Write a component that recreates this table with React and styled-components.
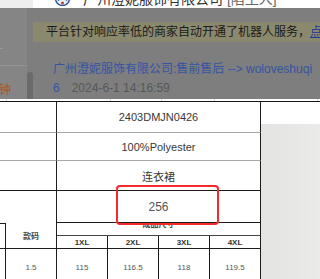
import React from "react";
import styled, { createGlobalStyle } from "styled-components";

const Global = createGlobalStyle`
  html, body { margin: 0; padding: 0; background: #fff; }
  body { font-family: "Liberation Sans", "Noto Sans CJK SC", sans-serif; }
  #root { width: 320px; height: 279px; overflow: hidden; }
`;

const Page = styled.div`
  width: 320px;
  height: 279px;
  overflow: hidden;
  display: flex;
  flex-direction: column;
  background: #fff;
`;

/* ---------- window title strip ---------- */
const TitleStrip = styled.div`
  height: 8px;
  flex: none;
  display: flex;
  overflow: hidden;
  background: #fff;
`;
const TitleSide = styled.div`
  width: 33px;
  flex: none;
  background: #eeeeee;
`;
const Avatar = styled.svg`
  flex: none;
  width: 15px;
  height: 15px;
  margin-left: 22px;
  margin-top: -9px;
`;
const TitleText = styled.span`
  margin-left: 13px;
  margin-top: -11px;
  font-size: 14px;
  line-height: 20px;
  color: #333;
  white-space: nowrap;
`;
const TitleTag = styled.span`
  color: #666;
`;

/* ---------- dimmed chat area ---------- */
const ChatArea = styled.div`
  height: 91px;
  flex: none;
  display: flex;
  background: #7e7e7e;
  overflow: hidden;
`;
const SideColumn = styled.div`
  width: 27px;
  flex: none;
  display: flex;
  flex-direction: column;
  background: #858585;
`;
const SideDash = styled.div`
  width: 3px;
  height: 1px;
  margin-top: 40px;
  background: #9a9a9a;
`;
const SideRule = styled.div`
  height: 1px;
  margin-top: 16px;
  background: #939393;
`;
const SideLabel = styled.div`
  margin-top: 17px;
  margin-left: -1px;
  font-size: 12px;
  line-height: 14px;
  color: #b0541f;
`;
const ScrollTrack = styled.div`
  width: 6px;
  flex: none;
  display: flex;
  flex-direction: column;
  justify-content: flex-end;
`;
const ScrollThumb = styled.div`
  height: 27px;
  background: #6b6b6b;
  border-radius: 3px 3px 0 0;
`;
const ChatMain = styled.div`
  flex: 1;
  min-width: 0;
  display: flex;
  flex-direction: column;
`;
const Banner = styled.div`
  margin-top: 14px;
  height: 20px;
  padding-left: 13px;
  background: #8a896e;
  font-size: 12px;
  line-height: 20px;
  color: #1a1a1a;
  white-space: nowrap;
  overflow: hidden;
`;
const BannerLink = styled.span`
  color: #1d3a9a;
  text-decoration: underline;
`;
const MessageLine = styled.div`
  margin-top: ${(p) => p.$gap}px;
  padding-left: 20px;
  font-size: 12px;
  line-height: 16px;
  color: ${(p) => p.$color};
  white-space: nowrap;
  overflow: hidden;
`;
const Count = styled.span`
  color: #3454a4;
  margin-right: 12px;
`;

/* ---------- faint grid strip above the sheet ---------- */
const GridStrip = styled.div`
  height: 2px;
  flex: none;
  display: flex;
  background: #fff;
`;
const FaintCell = styled.div`
  width: ${(p) => p.$w}px;
  flex: none;
  border-right: 1px solid #d6d6d6;
`;

/* ---------- spreadsheet ---------- */
const Sheet = styled.div`
  flex: 1;
  min-height: 0;
  display: flex;
  border-top: 1px solid #151515;
  overflow: hidden;
`;
const SheetGrid = styled.div`
  position: relative;
  width: 261px;
  flex: none;
  display: grid;
  grid-template-columns: 6px repeat(5, 51px);
  grid-template-rows: 31px 28px 30px 32px 13px 13px 36px;
  font-family: "Liberation Sans", "Noto Sans CJK SC", sans-serif;
`;
const Cell = styled.div`
  box-sizing: border-box;
  grid-column: ${(p) => p.$col};
  grid-row: ${(p) => p.$row};
  display: flex;
  align-items: center;
  justify-content: center;
  overflow: hidden;
  border-right: ${(p) => (p.$noRight ? "none" : "1px solid #1c1c1c")};
  border-bottom: ${(p) => (p.$bottom ? `1px solid ${p.$bottom}` : "none")};
  border-top: ${(p) => (p.$top ? `1px solid ${p.$top}` : "none")};
  font-size: ${(p) => p.$size || 11}px;
  font-weight: ${(p) => (p.$bold ? 700 : 400)};
  color: ${(p) => p.$color || "#383838"};
  white-space: nowrap;
`;
const ClippedHead = styled.div`
  box-sizing: border-box;
  grid-column: 3 / span 4;
  grid-row: 5;
  overflow: hidden;
  text-align: center;
  border-right: 1px solid #1c1c1c;
  border-bottom: 1px solid #444;
`;
const ClippedText = styled.div`
  margin-top: -2px;
  font-size: 8px;
  line-height: 8px;
  font-weight: 700;
  color: #444;
`;
const Highlight = styled.div`
  position: absolute;
  left: 116px;
  top: 83px;
  width: 103px;
  height: 40px;
  box-sizing: border-box;
  border: 2.5px solid #f7292b;
  border-radius: 4px;
  pointer-events: none;
`;
const PhotoColumn = styled.div`
  flex: 1;
  display: flex;
  flex-direction: column;
`;
const PhotoGap = styled.div`
  height: 22px;
  flex: none;
  background: #fff;
`;
const PhotoSurface = styled.div`
  flex: 1;
  background: linear-gradient(90deg, #e4e4e2 0%, #e7e7e5 60%, #ebebe9 100%);
`;

const upperRows = [
  { value: "2403DMJN0426", line: "#a8a8a8" },
  { value: "100%Polyester", line: "#a8a8a8" },
  { value: "连衣裙", line: "#1c1c1c" },
  { value: "256", line: "#1c1c1c", color: "#555", size: 12 },
];

const sizes = ["1XL", "2XL", "3XL", "4XL"];
const values = ["115", "116.5", "118", "119.5"];

export default function App() {
  return (
    <Page>
      <Global />
      <TitleStrip>
        <TitleSide />
        <Avatar viewBox="0 0 15 15">
          <circle cx="7.5" cy="7.5" r="7" fill="#eaf0fa" stroke="#2c4f9c" strokeWidth="1.4" />
          <path d="M3 9.5 Q7.5 4 12 9.5" fill="none" stroke="#2c4f9c" strokeWidth="1.5" />
          <circle cx="7.5" cy="12" r="1.6" fill="#c84a3a" />
        </Avatar>
        <TitleText>
          广州澄妮服饰有限公司 <TitleTag>[陷土人]</TitleTag>
        </TitleText>
      </TitleStrip>

      <ChatArea>
        <SideColumn>
          <SideDash />
          <SideRule />
          <SideLabel>钟</SideLabel>
        </SideColumn>
        <ScrollTrack>
          <ScrollThumb />
        </ScrollTrack>
        <ChatMain>
          <Banner>
            平台针对响应率低的商家自动开通了机器人服务，<BannerLink>点击查看</BannerLink>
          </Banner>
          <MessageLine $gap={19} $color="#3454a4">
            广州澄妮服饰有限公司:售前售后 --&gt; woloveshuqi
          </MessageLine>
          <MessageLine $gap={3} $color="#575757">
            <Count>6</Count>2024-6-1 14:16:59
          </MessageLine>
        </ChatMain>
      </ChatArea>

      <GridStrip>
        <FaintCell $w={6} />
        <FaintCell $w={103} />
        <FaintCell $w={50} />
        <FaintCell $w={52} />
        <FaintCell $w={102} />
      </GridStrip>

      <Sheet>
        <SheetGrid>
          {upperRows.map((r, i) => (
            <React.Fragment key={r.value}>
              <Cell
                $col="1 / span 2"
                $row={i + 1}
                $bottom={i === 3 ? null : r.line}
              />
              <Cell
                $col="3 / span 4"
                $row={i + 1}
                $bottom={r.line}
                $color={r.color}
                $size={r.size}
              >
                {r.value}
              </Cell>
            </React.Fragment>
          ))}

          <Cell $col={1} $row="5 / span 2" $top="#1c1c1c" $bottom="#1c1c1c" />
          <Cell $col={2} $row="5 / span 2" $bottom="#1c1c1c" $size={8} $bold $color="#444">
            款码
          </Cell>
          <ClippedHead>
            <ClippedText>成品尺寸</ClippedText>
          </ClippedHead>
          {sizes.map((s, i) => (
            <Cell key={s} $col={i + 3} $row={6} $bottom="#1c1c1c" $size={8} $bold $color="#333">
              {s}
            </Cell>
          ))}

          <Cell $col={1} $row={7} />
          <Cell $col={2} $row={7} $size={8} $color="#555">
            1.5
          </Cell>
          {values.map((v, i) => (
            <Cell key={v} $col={i + 3} $row={7} $size={8} $color="#555">
              {v}
            </Cell>
          ))}

          <Highlight />
        </SheetGrid>
        <PhotoColumn>
          <PhotoGap />
          <PhotoSurface />
        </PhotoColumn>
      </Sheet>
    </Page>
  );
}
